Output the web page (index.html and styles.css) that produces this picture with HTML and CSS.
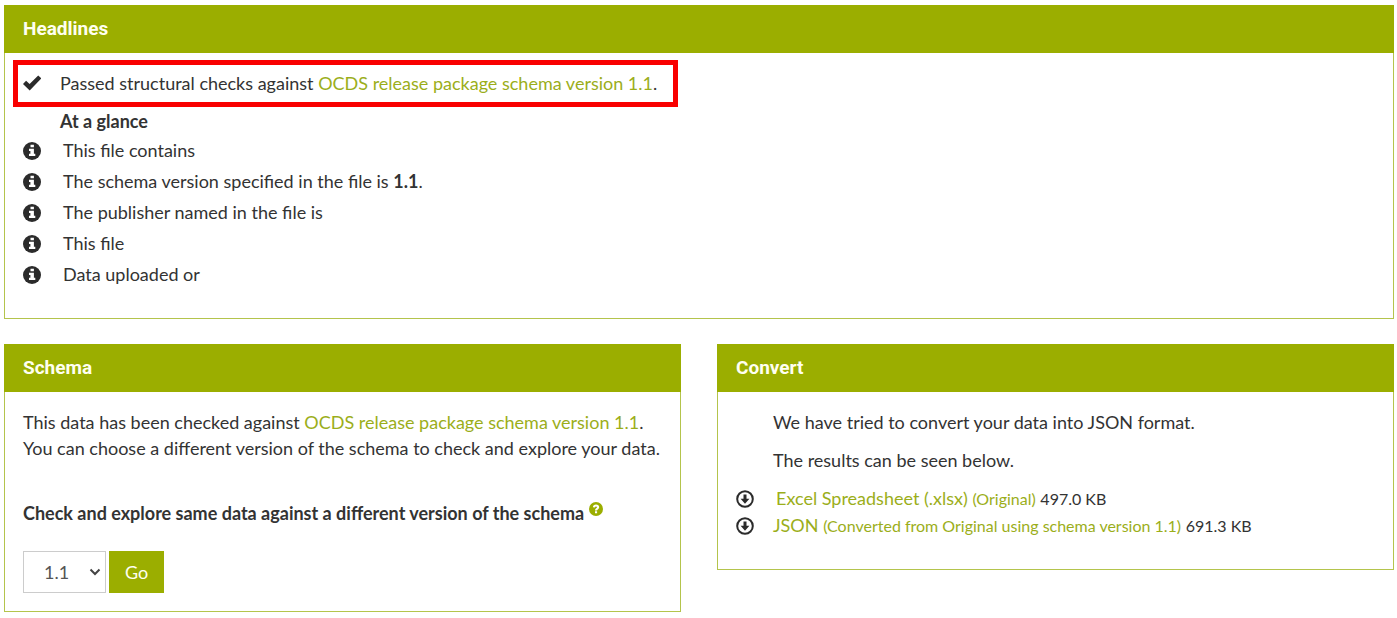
FILE: index.html
```
<!DOCTYPE html>
<html lang="en">
<head>
<meta charset="utf-8">
<title>Data review results</title>
<link rel="stylesheet" href="styles.css">
</head>
<body>
<svg class="symbols" aria-hidden="true">
  <symbol id="info" viewBox="0 0 18 18">
    <circle cx="9" cy="9" r="9"/>
    <path class="cut" d="M7.5 2.7h3.4v2.6H7.5zM6 6.7h4.9v5.1h1.4v2.3H6v-2.3h1.4V8.9H6z"/>
  </symbol>
  <symbol id="check" viewBox="0 0 18 16">
    <path d="M0 9 3.100 5.800l3.500 3.200L15.200.6 18.400 3.400 6.700 15.600z"/>
  </symbol>
  <symbol id="download" viewBox="0 0 18 18">
    <circle class="ring" cx="9" cy="9" r="7.8"/>
    <path d="M7.5 4.4h3v4.4h2.9L9 13.8 4.6 8.8h2.9z"/>
  </symbol>
  <symbol id="question" viewBox="0 0 14 14">
    <circle cx="7" cy="7" r="7"/>
    <path class="cut" d="M3.9 5.2C4 3.4 5.200 2.500 7 2.500c1.900 0 3.200 1 3.200 2.600 0 1.200-.7 1.800-1.400 2.300-.5.4-.7.600-.7 1.100H6c0-1.200.5-1.800 1.200-2.300.5-.4.8-.6.8-1 0-.5-.4-.8-1-.8s-1 .3-1.100 1zM6 9.300h2.100v2H6z"/>
  </symbol>
</svg>
<main class="page">
  <section class="panel">
    <h2 class="panel-title">Headlines</h2>
    <div class="headlines">
      <p class="callout"><svg class="icon"><use href="#check"/></svg><span>Passed structural checks against <a href="#schema">OCDS release package schema version 1.1</a>.</span></p>
      <h3 class="glance">At a glance</h3>
      <ul class="facts">
        <li><svg class="icon"><use href="#info"/></svg><span>This file contains</span></li>
        <li><svg class="icon"><use href="#info"/></svg><span>The schema version specified in the file is <strong>1.1</strong>.</span></li>
        <li><svg class="icon"><use href="#info"/></svg><span>The publisher named in the file is</span></li>
        <li><svg class="icon"><use href="#info"/></svg><span>This file</span></li>
        <li><svg class="icon"><use href="#info"/></svg><span>Data uploaded or</span></li>
      </ul>
    </div>
  </section>
  <div class="columns">
    <section class="panel" id="schema">
      <h2 class="panel-title">Schema</h2>
      <div class="schema-body">
        <p>This data has been checked against <a href="#schema">OCDS release package schema version 1.1</a>.<br>You can choose a different version of the schema to check and explore your data.</p>
        <form class="version-form">
          <label class="version-label" for="version">Check and explore same data against a different version of the schema <svg class="help"><use href="#question"/></svg></label>
          <div class="controls">
            <span class="select-wrap">
              <select id="version"><option>1.1</option><option>1.0</option></select>
              <svg class="chevron" viewBox="0 0 12 8" aria-hidden="true"><path d="m1.500 1.500 4.500 4.500 4.500-4.500"/></svg>
            </span>
            <button type="button">Go</button>
          </div>
        </form>
      </div>
    </section>
    <section class="panel">
      <h2 class="panel-title">Convert</h2>
      <div class="convert-body">
        <p class="note">We have tried to convert your data into JSON format.</p>
        <p class="note">The results can be seen below.</p>
        <ul class="downloads">
          <li><svg class="icon"><use href="#download"/></svg><span class="spaced"><a href="#xlsx">Excel Spreadsheet (.xlsx) <small>(Original)</small></a> <small>497.0 KB</small></span></li>
          <li><svg class="icon"><use href="#download"/></svg><span><a href="#json">JSON <small>(Converted from Original using schema version 1.1)</small></a> <small>691.3 KB</small></span></li>
        </ul>
      </div>
    </section>
  </div>
</main>
</body>
</html>
```
FILE: styles.css
```
* { box-sizing: border-box; }
body {
  margin: 0;
  background: #fff;
  color: #333;
  font: 18px/26px Lato, "Open Sans", sans-serif;
}
h2, h3, p, ul { margin: 0; padding: 0; }
ul { list-style: none; }
a { color: #9bae1a; text-decoration: none; }
small { font-size: 16px; }
.symbols { position: absolute; width: 0; height: 0; }
.page { padding: 5px 3px 5px 4px; }
.panel { border: 1px solid #b4c44c; background: #fff; }
.panel-title {
  margin: -1px -1px 0;
  padding: 11px 19px;
  background: #9bae00;
  color: #fffff0;
  font: 700 19px/26px Roboto, sans-serif;
}
.icon {
  flex: none;
  width: 18px;
  height: 18px;
  fill: #2b2b2b;
}
.cut { fill: #fff; }
.ring { fill: none; stroke: #2b2b2b; stroke-width: 2; }
.headlines {
  display: flex;
  flex-direction: column;
  align-items: flex-start;
  padding: 7px 8px 28px;
}
.callout {
  display: flex;
  align-items: center;
  gap: 19px;
  padding: 5px 16px 6px 5px;
  border: 5px solid #f90000;
}
.glance {
  padding: 1px 0 1px 47px;
  font-size: 18px;
  line-height: 26px;
}
.facts { padding-left: 10px; }
.facts li {
  display: flex;
  align-items: center;
  gap: 22px;
  line-height: 31px;
}
.columns {
  display: grid;
  grid-template-columns: 1fr 1fr;
  align-items: start;
  gap: 36px;
  margin-top: 25px;
}
.schema-body { padding: 17px 18px 18px; }
.version-form { margin-top: 39px; }
.version-label { display: block; font-weight: 700; }
.help {
  width: 14px;
  height: 14px;
  fill: #9bae00;
  vertical-align: 4px;
}
.controls { display: flex; gap: 3px; margin-top: 25px; }
.select-wrap { position: relative; }
select {
  display: block;
  width: 83px;
  height: 42px;
  padding: 0 20px;
  border: 1px solid #ccc;
  border-radius: 0;
  background: #fff;
  color: #555;
  font: inherit;
  appearance: none;
}
.chevron {
  position: absolute;
  top: 17px;
  right: 5px;
  width: 12px;
  height: 8px;
  fill: none;
  stroke: #444;
  stroke-width: 2;
  pointer-events: none;
}
button {
  height: 42px;
  padding: 0 16px;
  border: 0;
  background: #9bae00;
  color: #fffff0;
  font: inherit;
}
.convert-body { padding: 17px 18px 30px; }
.note { margin: 0 0 12px 37px; }
.downloads li { display: flex; align-items: center; gap: 19px; }
.spaced { padding-left: 3px; }
```
